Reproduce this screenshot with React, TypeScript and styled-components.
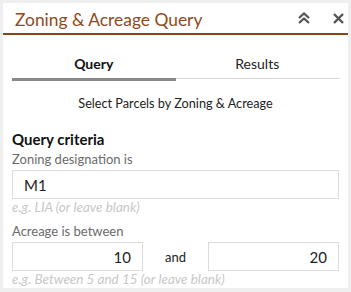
import styled, { createGlobalStyle } from "styled-components";

const Global = createGlobalStyle`
  html, body {
    margin: 0;
    padding: 0;
    background: #efefef;
  }
  body {
    font-family: Lato, "Open Sans", Arial, sans-serif;
    color: #222;
  }
`;

const Page = styled.div`
  width: 351px;
  height: 292px;
  padding: 3px 3px 4px 3px;
  box-sizing: border-box;
`;

const Panel = styled.div`
  width: 345px;
  height: 285px;
  background: #fff;
  overflow: hidden;
  display: flex;
  flex-direction: column;
`;

const Header = styled.div`
  height: 30px;
  flex-shrink: 0;
  border-bottom: 2px solid #8b4513;
  display: flex;
  align-items: center;
  padding: 0 0 0 12px;
`;

const Title = styled.div`
  flex: 1;
  font-size: 17.4px;
  color: #8e4a1a;
  padding-top: 2px;
`;

const IconButton = styled.div<{ $w: number }>`
  width: ${(p) => p.$w}px;
  height: 22px;
  display: flex;
  align-items: center;
  justify-content: center;
  margin-left: 12px;
  color: #555;
`;

const Body = styled.div`
  padding: 0 9px;
  display: flex;
  flex-direction: column;
`;

const Tabs = styled.div`
  display: flex;
  margin-top: 20px;
`;

const Tab = styled.div<{ $active?: boolean }>`
  flex: 1;
  text-align: center;
  font-size: 14px;
  font-weight: ${(p) => (p.$active ? 700 : 400)};
  color: ${(p) => (p.$active ? "#111" : "#222")};
  padding-bottom: 5px;
  border-bottom: ${(p) => (p.$active ? "3px solid #8a8a8a" : "1px solid #d4d4d4")};
  margin-bottom: ${(p) => (p.$active ? "0" : "2px")};
  align-self: flex-start;
  line-height: 18px;
`;

const Subtitle = styled.div`
  text-align: center;
  font-size: 12.7px;
  margin-top: 14px;
  color: #222;
`;

const Section = styled.div`
  font-size: 15px;
  font-weight: 700;
  margin-top: 19px;
  color: #111;
`;

const Label = styled.div`
  font-size: 13px;
  color: #6a6a6a;
  margin-top: 2px;
  line-height: 18px;
`;

const Field = styled.div<{ $align?: string }>`
  height: 29px;
  border: 1px solid #dcdcdc;
  box-sizing: border-box;
  display: flex;
  align-items: center;
  justify-content: ${(p) => (p.$align === "right" ? "flex-end" : "flex-start")};
  padding: 0 11px;
  font-size: 15px;
  color: #222;
  margin-top: 2px;
`;

const Hint = styled.div`
  font-size: 13.5px;
  font-style: italic;
  color: #c8c8c8;
  line-height: 17px;
`;

const RangeRow = styled.div`
  display: grid;
  grid-template-columns: 131px 1fr 131px;
  align-items: center;
`;

const And = styled.div`
  text-align: center;
  font-size: 13px;
  color: #222;
  padding-top: 3px;
`;

const Spacer = styled.div<{ $h: number }>`
  height: ${(p) => p.$h}px;
`;

export default function App() {
  return (
    <Page>
      <Global />
      <Panel>
        <Header>
          <Title>Zoning &amp; Acreage Query</Title>
          <IconButton $w={24}>
            <svg width="14" height="12" viewBox="0 0 14 12" fill="none" stroke="#555" strokeWidth="2.3" strokeLinejoin="miter">
              <path d="M2 6 L7 1.5 L12 6" />
              <path d="M2 11 L7 6.5 L12 11" />
            </svg>
          </IconButton>
          <IconButton $w={20}>
            <svg width="11" height="11" viewBox="0 0 11 11" stroke="#555" strokeWidth="2.4">
              <path d="M1 1 L10 10 M10 1 L1 10" />
            </svg>
          </IconButton>
        </Header>
        <Body>
          <Tabs>
            <Tab $active>Query</Tab>
            <Tab>Results</Tab>
          </Tabs>
          <Subtitle>Select Parcels by Zoning &amp; Acreage</Subtitle>
          <Section>Query criteria</Section>
          <Label>Zoning designation is</Label>
          <Field>M1</Field>
          <Hint>e.g. LIA (or leave blank)</Hint>
          <Spacer $h={4} />
          <Label>Acreage is between</Label>
          <RangeRow>
            <Field $align="right">10</Field>
            <And>and</And>
            <Field $align="right">20</Field>
          </RangeRow>
          <Hint>e.g. Between 5 and 15 (or leave blank)</Hint>
        </Body>
      </Panel>
    </Page>
  );
}
